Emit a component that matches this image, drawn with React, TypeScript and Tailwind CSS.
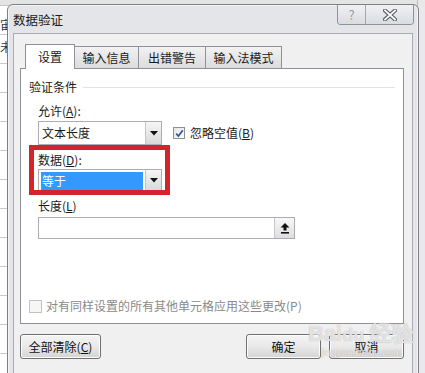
import React from 'react';

const font = "font-['Noto_Sans_CJK_SC',sans-serif]";

const U: React.FC<{ children: React.ReactNode }> = ({ children }) => (
  <span className="underline underline-offset-1">{children}</span>
);

const DropButton: React.FC = () => (
  <div className="w-[16px] h-full flex items-center justify-center border-l border-[#c4c6cc] bg-gradient-to-b from-[#f6f6f6] to-[#d9d9d9]">
    <svg width="8" height="5" viewBox="0 0 8 5">
      <path d="M0 0h8L4 4.5z" fill="#111" />
    </svg>
  </div>
);

const WinButton: React.FC<{ w: string; children: React.ReactNode }> = ({ w, children }) => (
  <div
    className={`${w} h-[25px] flex items-center justify-center rounded-[3px] border border-[#707070] bg-gradient-to-b from-[#f4f4f4] via-[#e9e9e9] to-[#d4d4d4] text-[12px] text-[#111] shadow-[inset_0_0_0_1px_#fcfcfc]`}
  >
    {children}
  </div>
);

const tabs = ['输入信息', '出错警告', '输入法模式'];
const tabWidths = ['w-[64px]', 'w-[67px]', 'w-[76px]'];

export default function App() {
  const rows = Array.from({ length: 14 });
  return (
    <div className={`relative w-[425px] h-[373px] overflow-hidden bg-[#f7f7f7] ${font}`}>
      {/* excel sheet behind the dialog */}
      <div className="flex flex-col">
        <div className="h-[6px] bg-[#e4e4e4] border-b border-[#c6c6c6]" />
        {rows.map((_, i) => (
          <div key={i} className="h-[29px] border-b border-[#c9c9c9] bg-white" />
        ))}
      </div>
      <div className="absolute left-[0px] top-[18px] text-[12px] leading-[14px] text-[#333]">宙</div>
      <div className="absolute left-[0px] top-[40px] text-[12px] leading-[14px] text-[#333]">未</div>
      <div className="absolute right-[0px] top-[0px] w-[8px] h-[373px] bg-[#e9e9e9] border-l border-[#bdbdbd]" />

      {/* dialog window */}
      <div className="absolute left-[7px] top-[4px] w-[412px] h-[380px] flex flex-col rounded-t-[6px] border border-[#7d7f84] bg-[#e3e5e8] shadow-[0_0_0_1px_#f4f5f7_inset]">
        <div className="h-[28px] flex items-start justify-between">
          <div className="mt-[7px] ml-[5px] text-[12.5px] leading-[16px] text-[#1b1b1b]">数据验证</div>
          <div className="mr-[4px] h-[20px] flex border border-t-0 border-[#8e9196] rounded-b-[4px] overflow-hidden">
            <div className="w-[28px] h-full flex items-center justify-center border-r border-[#a3a6ab] bg-gradient-to-b from-[#f0f1f3] to-[#d9dce0] text-[13px] leading-none text-[#9a9da2]">
              ?
            </div>
            <div className="w-[47px] h-full flex items-center justify-center bg-gradient-to-b from-[#f0f1f3] to-[#d9dce0]">
              <svg width="14" height="12" viewBox="0 0 14 12">
                <path d="M2 1.5l10 9M12 1.5l-10 9" stroke="#5a5d62" strokeWidth="4" strokeLinecap="square" />
                <path d="M2 1.5l10 9M12 1.5l-10 9" stroke="#fafafa" strokeWidth="1.8" strokeLinecap="square" />
              </svg>
            </div>
          </div>
        </div>

        {/* client area */}
        <div className="mx-[5px] flex-1 flex flex-col border border-[#a9acb1] bg-[#f0f0f0] pt-[10px] pl-[6px] pr-[8px]">
          {/* tabs */}
          <div className="relative z-10 h-[24px] flex items-end pl-[5px] text-[12px] leading-[16px] text-[#1a1a1a]">
            <div className="w-[50px] h-[25px] -mb-px flex items-center justify-center border border-b-0 border-[#8e9198] bg-white">
              设置
            </div>
            {tabs.map((t, i) => (
              <div
                key={t}
                className={`${tabWidths[i]} h-[22px] flex items-center justify-center border border-l-0 border-b-0 border-[#8e9198] bg-gradient-to-b from-[#f2f2f2] to-[#dcdcdc]`}
              >
                {t}
              </div>
            ))}
          </div>

          {/* tab panel */}
          <div className="h-[256px] flex flex-col border border-[#8e9198] bg-white text-[12px] leading-[16px] text-[#1a1a1a]">
            <div className="mt-[10px] h-[16px] flex items-center pl-[8px] pr-[8px]">
              <span>验证条件</span>
              <div className="ml-[6px] flex-1 h-px bg-[#dde2e8]" />
            </div>

            <div className="mt-[8px] ml-[17px] h-[16px]">
              允许(<U>A</U>):
            </div>

            <div className="mt-[2px] ml-[17px] flex items-center">
              <div className="w-[124px] h-[24px] flex border border-[#abadb3] bg-white">
                <div className="flex-1 flex items-center pl-[3px]">文本长度</div>
                <DropButton />
              </div>
              <div className="ml-[11px] w-[12px] h-[12px] flex items-center justify-center border border-[#8e8f8f] bg-gradient-to-br from-[#e6e6e6] to-[#fdfdfd]">
                <svg width="9" height="9" viewBox="0 0 9 9">
                  <path d="M1.2 4.6l2.2 2.4L7.8 1.2" stroke="#3d5a98" strokeWidth="1.8" fill="none" />
                </svg>
              </div>
              <div className="ml-[5px]">
                忽略空值(<U>B</U>)
              </div>
            </div>

            {/* highlighted box */}
            <div className="ml-[8px] w-[141px] h-[50px] flex flex-col border-[5px] border-[#d5232c] pl-[4px]">
              <div className="h-[19px] flex items-center">
                数据(<U>D</U>):
              </div>
              <div className="w-[124px] h-[21px] flex border border-b-0 border-[#abadb3] bg-white">
                <div className="flex-1 p-[2px] pb-0">
                  <div className="h-full flex items-center bg-[#3399ff] pl-[1px] text-white">等于</div>
                </div>
                <DropButton />
              </div>
            </div>

            <div className="mt-[3px] ml-[17px] h-[16px]">
              长度(<U>L</U>)
            </div>
            <div className="mt-[3px] ml-[17px] w-[257px] h-[22px] flex justify-end border border-[#abadb3] bg-white">
              <div className="w-[20px] h-full flex items-center justify-center border-l border-[#c4c6cc] bg-gradient-to-b from-[#f8f8f8] to-[#dedede]">
                <svg width="10" height="11" viewBox="0 0 10 11">
                  <path d="M5 0L9.5 4.5H6.5V7.5H3.5V4.5H0.5z" fill="#111" />
                  <rect x="1" y="9" width="8" height="1.6" fill="#111" />
                </svg>
              </div>
            </div>

            <div className="mt-auto mb-[9px] ml-[8px] h-[16px] flex items-center text-[#8a8a8a]">
              <div className="w-[13px] h-[13px] border border-[#c2c2c2] bg-[#f6f6f6]" />
              <span className="ml-[4px]">对有同样设置的所有其他单元格应用这些更改(P)</span>
            </div>
          </div>

          {/* buttons */}
          <div className="mt-[10px] flex items-center">
            <WinButton w="w-[81px]">
              全部清除(<U>C</U>)
            </WinButton>
            <div className="flex-1" />
            <WinButton w="w-[75px]">确定</WinButton>
            <div className="w-[8px]" />
            <WinButton w="w-[75px]">取消</WinButton>
          </div>
        </div>
      </div>

      {/* watermark */}
      <div className="absolute left-[308px] top-[322px] flex flex-col items-center pointer-events-none">
        <div className="text-[22px] leading-[24px] font-bold text-white/70 [text-shadow:0_0_1px_#a0a0a0] font-['Liberation_Sans',sans-serif]">
          Bai<span className="text-[18px]">du</span> 经验
        </div>
        <div className="text-[10px] leading-[12px] text-white/70 [text-shadow:0_0_1px_#a0a0a0] font-['Liberation_Sans',sans-serif]">
          jingyan.baidu.com
        </div>
      </div>
    </div>
  );
}
